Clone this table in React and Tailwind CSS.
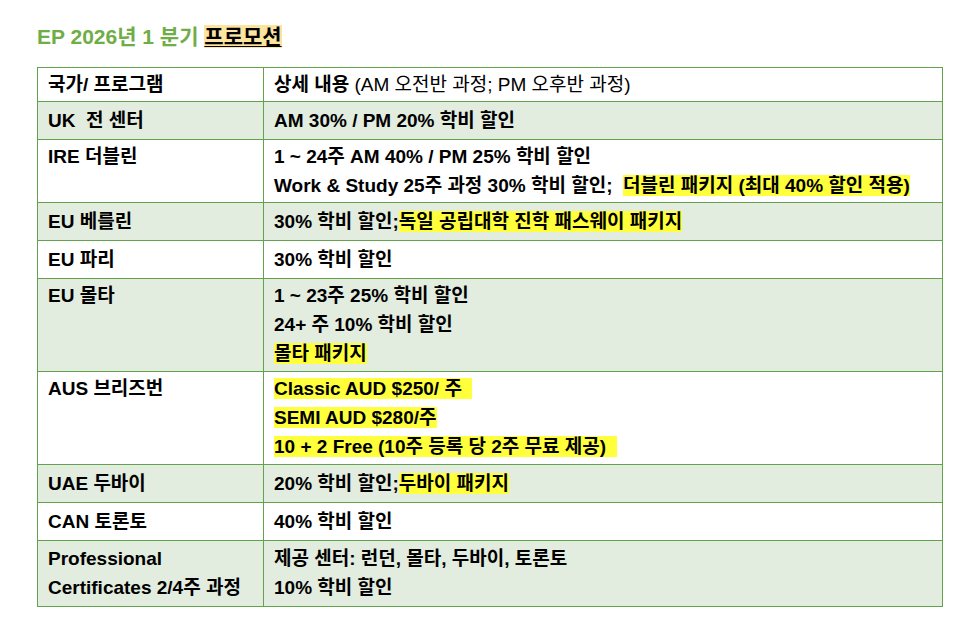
import React from "react";

const H = ({ children }) => <span className="bg-[#ffff3c]">{children}</span>;

const rows = [
  { left: ["UK  전 센터"], right: [<>AM 30% / PM 20% 학비 할인</>], green: true },
  {
    left: ["IRE 더블린"],
    right: [
      <>1 ~ 24주 AM 40% / PM 25% 학비 할인</>,
      <>
        Work &amp; Study 25주 과정 30% 학비 할인;{"\u00a0\u00a0"}
        <H>더블린 패키지 (최대 40% 할인 적용)</H>
      </>,
    ],
    pad: "pt-[2px] pb-[2px]",
  },
  {
    left: ["EU 베를린"],
    right: [
      <>
        30% 학비 할인;<H>독일 공립대학 진학 패스웨이 패키지</H>
      </>,
    ],
    green: true,
  },
  { left: ["EU 파리"], right: [<>30% 학비 할인</>] },
  {
    left: ["EU 몰타"],
    right: [<>1 ~ 23주 25% 학비 할인</>, <>24+ 주 10% 학비 할인</>, <H>몰타 패키지</H>],
    green: true,
    pad: "pt-[2px] pb-[3px]",
  },
  {
    left: ["AUS 브리즈번"],
    right: [
      <H>Classic AUD $250/ 주{"\u00a0\u00a0"}</H>,
      <H>SEMI AUD $280/주</H>,
      <H>10 + 2 Free (10주 등록 당 2주 무료 제공){"\u00a0\u00a0"}</H>,
    ],
    pad: "pt-[2px] pb-[3px]",
  },
  {
    left: ["UAE 두바이"],
    right: [
      <>
        20% 학비 할인;<H>두바이 패키지</H>
      </>,
    ],
    green: true,
  },
  { left: ["CAN 토론토"], right: [<>40% 학비 할인</>] },
  {
    left: ["Professional", "Certificates 2/4주 과정"],
    right: [<>제공 센터: 런던, 몰타, 두바이, 토론토</>, <>10% 학비 할인</>],
    green: true,
    pad: "pt-[3px] pb-[4px]",
  },
];

export default function App() {
  return (
    <div
      className="w-[966px] h-[622px] bg-white text-black pl-[37px] pt-[23px]"
      style={{ fontFamily: '"Liberation Sans", "Noto Sans CJK KR", sans-serif' }}
    >
      <h1 className="text-[21px] leading-[28px] font-bold text-[#6fad46]">
        EP 2026년 1 분기{" "}
        <span className="bg-[#fce3a0] text-black underline decoration-1 underline-offset-2">프로모션</span>
      </h1>
      <div className="mt-[16px] w-[906px] border border-[#62a24d] text-[19px] leading-[29px] font-bold">
        <div className="grid grid-cols-[226px_1fr] bg-white">
          <div className="px-[10px] py-[2px] border-r border-[#62a24d]">국가/ 프로그램</div>
          <div className="px-[10px] py-[2px]">
            상세 내용 <span className="font-normal">(AM 오전반 과정; PM 오후반 과정)</span>
          </div>
        </div>
        {rows.map((r, i) => {
          const pad = r.pad || "py-[4px]";
          return (
            <div
              key={i}
              className={`grid grid-cols-[226px_1fr] border-t border-[#62a24d] ${
                r.green ? "bg-[#e2ecdf]" : "bg-white"
              }`}
            >
              <div className={`px-[10px] ${pad} border-r border-[#62a24d]`}>
                {r.left.map((t, j) => (
                  <div key={j} className="whitespace-pre">{t}</div>
                ))}
              </div>
              <div className={`px-[10px] ${pad}`}>
                {r.right.map((t, j) => (
                  <div key={j} className="whitespace-pre">{t}</div>
                ))}
              </div>
            </div>
          );
        })}
      </div>
    </div>
  );
}
